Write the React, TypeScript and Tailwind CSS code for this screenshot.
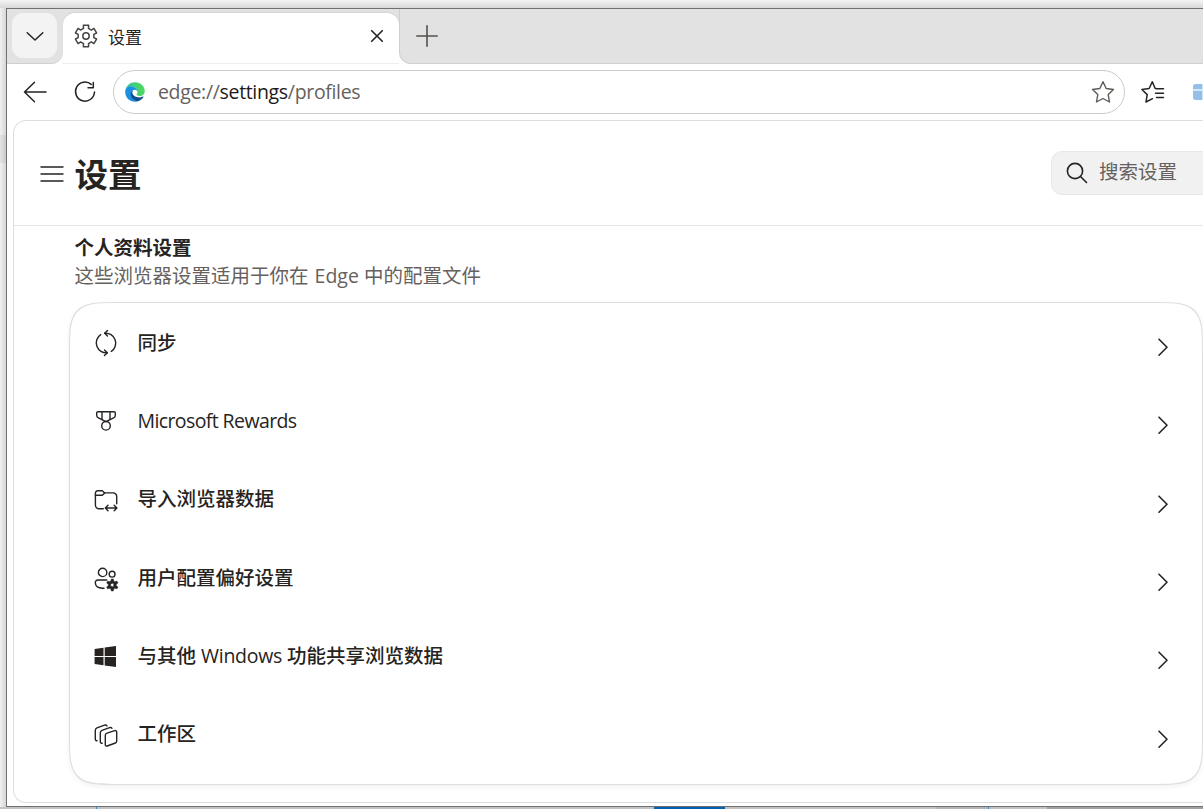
import type { ReactNode } from 'react'

type IconProps = {
  children: ReactNode
  className?: string
  size?: number
  stroke?: number
}

function Icon({ children, className = '', size = 24, stroke = 1.4 }: IconProps) {
  return (
    <svg
      width={size}
      height={size}
      viewBox={`0 0 ${size} ${size}`}
      fill="none"
      stroke="currentColor"
      strokeWidth={stroke}
      strokeLinecap="round"
      strokeLinejoin="round"
      className={`shrink-0 overflow-visible ${className}`}
    >
      {children}
    </svg>
  )
}

// closed outline with six teeth
function gearPath(cx: number, cy: number, outer: number, inner: number, tip: number, root: number) {
  const points: string[] = []
  for (let i = 0; i < 6; i++) {
    const mid = i * 60 - 90
    const corners = [
      [mid - root, inner],
      [mid - tip, outer],
      [mid + tip, outer],
      [mid + root, inner],
    ]
    for (const [deg, r] of corners) {
      const a = (deg * Math.PI) / 180
      points.push(`${(cx + r * Math.cos(a)).toFixed(2)} ${(cy + r * Math.sin(a)).toFixed(2)}`)
    }
  }
  return `M${points.join('L')}Z`
}

function EdgeLogo() {
  return (
    <svg width="20" height="20" viewBox="0 0 20 20" className="shrink-0">
      <defs>
        <linearGradient id="edge-green" x1="0" y1="0.5" x2="1" y2="0.5">
          <stop offset="0" stopColor="#2fb9c9" />
          <stop offset="0.4" stopColor="#42cd78" />
          <stop offset="1" stopColor="#4cda5c" />
        </linearGradient>
      </defs>
      <path d="M0.4 8.2C1.2 3.5 5.1.2 10 .2c5.7 0 9.8 4.2 9.8 8.7 0 3-2.2 5-5.1 5-2 0-3.2-.7-3.2-1.4 0-.5 1-1 1-2.6C12.5 6.5 9.4 4.7 6.6 4.7 3.7 4.7 1.500 6 .4 8.200z" fill="url(#edge-green)" />
      <path d="M.2 10C.2 6.500 3 4.600 6.200 4.600c3.400 0 6.300 2.400 6.300 5.200-1-2-2.800-2.400-4.100-1.700C6.300 9.200 5.800 11.200 6.200 13c.7 3.600 3.400 6.200 6.900 6.300-1 .4-2 .5-3.100.5C4.500 19.800.200 15.400.200 10z" fill="#1b8fe0" />
      <path d="M8.400 8.100C6.200 9 5.400 11.300 5.900 13.600c.8 3.500 3.900 6 7.200 5.700 2.300-.8 4.200-2.200 5.400-4.200.2-.4-.1-.7-.5-.5-1 .5-2.100.8-3.300.8-4.500 0-8-2.600-7.300-5.400.1-.7.4-1.400 1-1.900z" fill="#0d4f8f" />
    </svg>
  )
}

const settings = [
  {
    id: 'sync',
    title: '同步',
    icon: (
      <>
        <path d="M6.700 3.700A9.850 9.850 0 0 0 13.300 21.700" />
        <path d="M17.300 20.300A9.850 9.850 0 0 0 10.700 2.300" />
        <path d="M10.500 19L13.300 21.700L10.500 24.500M13.500-.5L10.700 2.300L13.500 5.100" />
      </>
    ),
  },
  {
    id: 'rewards',
    title: <span className="font-normal tracking-[-0.6px]">Microsoft Rewards</span>,
    icon: (
      <>
        <path d="M4 2.700h16a1.300 1.300 0 0 1 1.300 1.300v2.200a3 3 0 0 1-1.700 2.700L12 12.600L4.400 8.900A3 3 0 0 1 2.700 6.200V4A1.300 1.300 0 0 1 4 2.700z" />
        <path d="M8 2.700v7.800M16 2.700v7.800" />
        <circle cx="12" cy="16.800" r="4.300" />
      </>
    ),
  },
  {
    id: 'import',
    title: '导入浏览器数据',
    icon: (
      <>
        <path d="M9.300 20.700H5A3.600 3.600 0 0 1 1.400 17.100V5A2.300 2.300 0 0 1 3.700 2.700H8.300L10.700 4.900H19.200A3.500 3.500 0 0 1 22.700 8.400V15.700" />
        <path d="M1.400 7.200H8.300L10.700 4.900" />
        <path d="M11.500 20H22.700M14 17.300L11.300 20L14 22.700M20.200 17.300L22.900 20L20.200 22.700" />
      </>
    ),
  },
  {
    id: 'preferences',
    title: '用户配置偏好设置',
    icon: (
      <>
        <circle cx="8.600" cy="6.400" r="4.200" />
        <circle cx="18.100" cy="8.200" r="2.900" />
        <path d="M12.800 14H3.900A2.600 2.600 0 0 0 1.300 16.600C1.300 20.300 4.500 22.200 8.600 22.200H10" />
        <path
          d={`${gearPath(18.3, 19, 6, 3.7, 9, 28)}M20.100 19A1.800 1.800 0 1 0 16.500 19A1.800 1.800 0 1 0 20.100 19Z`}
          fill="currentColor"
          fillRule="evenodd"
          strokeWidth="0.6"
        />
      </>
    ),
  },
  {
    id: 'windows',
    title: (
      <>
        与其他 <span className="font-normal tracking-[-0.3px]">Windows</span> 功能共享浏览数据
      </>
    ),
    icon: (
      <path
        d="M.6 4.900L9.500 3.700V11.900H.6zM10.700 3.500L22 1.900V11.900H10.700zM.6 13H9.500V21.200L.6 20zM10.700 13H22V23L10.700 21.400z"
        fill="currentColor"
        stroke="none"
      />
    ),
  },
  {
    id: 'workspaces',
    title: '工作区',
    icon: (
      <>
        <path d="M13 10.200L20.800 7.600A1.500 1.500 0 0 1 22.700 9V18.200A2 2 0 0 1 21.400 20L13.200 23A1.400 1.400 0 0 1 11.300 21.700V12.500A2.400 2.400 0 0 1 13 10.200z" />
        <path d="M8.200 20.200A1.600 1.600 0 0 1 6.300 18.700V9.800A2.600 2.600 0 0 1 8 7.400L15.600 4.600Q17.300 4.100 17.900 5.300" />
        <path d="M3.100 17.700A1.600 1.600 0 0 1 1.300 16.200V7.300A2.600 2.600 0 0 1 3 4.900L10.500 2.200Q12.200 1.700 12.900 2.900" />
      </>
    ),
  },
]

function TabStrip() {
  return (
    <div className="flex h-[55px] shrink-0">
      <div className="w-14 rounded-br-[12px] border-b border-[#cfcfcf] bg-[#e2e2e2] pt-1 pl-[5px]">
        <button className="flex size-[45px] items-center justify-center rounded-[11px] bg-[#f3f3f3] text-[#262321]">
          <Icon size={18} stroke={1.5}>
            <path d="M1.200 5.700L9 13L16.800 5.700" />
          </Icon>
        </button>
      </div>
      <div className="w-[336px] bg-[linear-gradient(#e2e2e2_50%,#ffffff_50%)] pt-1">
        <div className="flex h-[51px] items-center rounded-t-[12px] border-b border-[#ededed] bg-white pr-[15px] pl-[10.5px] shadow-[0_-1px_1px_#d4d4d4]">
          <Icon size={24} stroke={1.5} className="-mt-1 text-[#454545]">
            <path d={gearPath(12, 12, 11, 8, 14, 18)} />
            <circle cx="12" cy="12" r="3.200" />
          </Icon>
          <span className="-mt-px ml-[10.5px] flex-1 text-[17px]">设置</span>
          <Icon size={14} className="-mt-1" stroke={1.6}>
            <path d="M1.700 1.700L12.300 12.300M12.300 1.700L1.700 12.300" />
          </Icon>
        </div>
      </div>
      <div className="flex-1 rounded-bl-[12px] border-b border-l border-[#cfcfcf] bg-[#e2e2e2] pt-[16px] pl-[16px]">
        <Icon size={22} stroke={1.6} className="text-[#55504d]">
          <path d="M.8 11H21.200M11 .8V21.200" />
        </Icon>
      </div>
    </div>
  )
}

function Toolbar() {
  return (
    <div className="flex h-14 shrink-0 items-center">
      <Icon size={24} className="ml-4" stroke={1.5}>
        <path d="M1.500 12H23M11.500 2.300L1.500 12L11.500 21.700" />
      </Icon>
      <Icon size={24} className="ml-[26px]" stroke={1.5}>
        <path d="M18.200 4.400A9.500 9.500 0 1 0 21.500 12" />
        <path d="M20.300 2.500V7.700H15" />
      </Icon>
      <div className="ml-4 flex h-11 w-[1012px] shrink-0 items-center rounded-full border-[1.5px] border-[#cbcbcb] bg-white pr-[9px] pl-[11px]">
        <EdgeLogo />
        <span className="-mt-px ml-[13px] flex-1 text-[19.5px] tracking-[-0.33px] text-[#66615d]">
          edge://<span className="text-[#1b1a19]">settings</span>/profiles
        </span>
        <Icon size={24} stroke={1.4} className="text-[#5f5a56]">
          <path d="M12 1.700L15.200 8.500L22.500 9.500L17.200 14.600L18.500 22L12 18.500L5.500 22L6.800 14.600L1.500 9.500L8.800 8.500Z" />
        </Icon>
      </div>
      <Icon size={24} className="ml-4" stroke={1.5}>
        <path d="M15 8.500H14.200L11.300 1.700L8.100 8.500L.9 9.500L6.200 14.600L5 22L11.500 18.700" />
        <path d="M15.500 8.700H22.500M14.500 13.200H22.500M15.500 17.500H22.500" />
      </Icon>
      <div className="ml-7 grid h-4 w-[22px] shrink-0 grid-cols-[9px_12px] grid-rows-[5px_9px] gap-x-px gap-y-0.5 overflow-hidden rounded-[3px] bg-[#d3e7f7]">
        <span className="bg-[#93bfe8]" />
        <span className="bg-[#a9cfee]" />
        <span className="bg-[#93bfe8]" />
        <span className="bg-[#a9cfee]" />
      </div>
    </div>
  )
}

function SettingsHeader() {
  return (
    <header className="flex h-[105px] shrink-0 items-center border-b border-[#e6e6e6] pl-[26px]">
      <Icon size={24} className="mt-px">
        <path d="M1 5H23M1 12H23M1 19H23" />
      </Icon>
      <h1 className="mt-[3px] ml-[10.5px] flex-1 text-[33.5px] font-bold">设置</h1>
      <div className="-mr-4 flex h-11 w-[168px] items-center rounded-[11px] border border-[#e8e8e8] bg-[#f1f1f1] pl-[14px] text-[#66615d]">
        <Icon size={22} stroke={1.6} className="text-[#262321]">
          <circle cx="9" cy="9" r="7.600" />
          <path d="M14.500 14.500L20.500 20.500" />
        </Icon>
        <span className="-mt-0.5 ml-[11px] text-[19.5px]">搜索设置</span>
      </div>
    </header>
  )
}

export default function App() {
  return (
    <div className="flex h-[809px] w-[1203px] flex-col overflow-hidden bg-white font-['Open_Sans','Noto_Sans_CJK_SC',sans-serif] leading-none text-[#262321]">
      <div className="h-2 shrink-0 bg-linear-to-b from-[#f5f5f5] to-[#d8d8d8]" />
      <div className="flex h-[799px] shrink-0">
        <div className="w-1.5 shrink-0 bg-linear-to-r from-[#f1f1f1] to-[#d6d6d6] pt-[127px]">
          <div className="h-7 bg-black/5" />
        </div>
        <main className="flex min-w-0 flex-1 flex-col border-y border-l border-[#707070] bg-white">
          <TabStrip />
          <Toolbar />
          <section className="ml-1.5 flex h-[683px] min-w-0 flex-col rounded-l-[13px] border-y-[1.5px] border-l-[1.5px] border-[#dedede]">
            <SettingsHeader />
            <div className="pt-3 pl-[60.5px]">
              <h2 className="text-[19.5px] leading-5 font-bold">个人资料设置</h2>
              <p className="mt-2 text-[19.5px] leading-5 text-[#66615d]">
                这些浏览器设置适用于你在 <span className="ml-px">Edge</span> 中的配置文件
              </p>
            </div>
            <div className="mt-4 ml-[55px] h-[483px] w-[1134px] shrink-0 rounded-[52px] border border-[#dedede] bg-white py-[5px] shadow-[0_2px_5px_rgba(0,0,0,0.06)] [corner-shape:squircle]">
              {settings.map((item) => (
                <div key={item.id} className="flex h-[78.3px] items-center pr-[27px] pl-6">
                  <Icon className="-mt-2">{item.icon}</Icon>
                  <span className="-mt-[9px] ml-[19.5px] flex-1 text-[19.5px] font-medium">{item.title}</span>
                  <Icon size={24} stroke={1.6}>
                    <path d="M8 4.200L16 12.200L8 20.200" />
                  </Icon>
                </div>
              ))}
            </div>
          </section>
        </main>
      </div>
      <div className="flex h-0.5 shrink-0 bg-[#c3c3c3]">
        <span className="ml-24 w-px bg-[#3d86c6]" />
        <span className="ml-[557px] w-[71px] bg-[#0062b1]" />
        <span className="ml-[211px] w-[52px] bg-[#b5b5b5]" />
        <span className="w-px bg-[#3d86c6]" />
        <span className="ml-[58px] flex-1 bg-[#a2a2a2]" />
      </div>
    </div>
  )
}
